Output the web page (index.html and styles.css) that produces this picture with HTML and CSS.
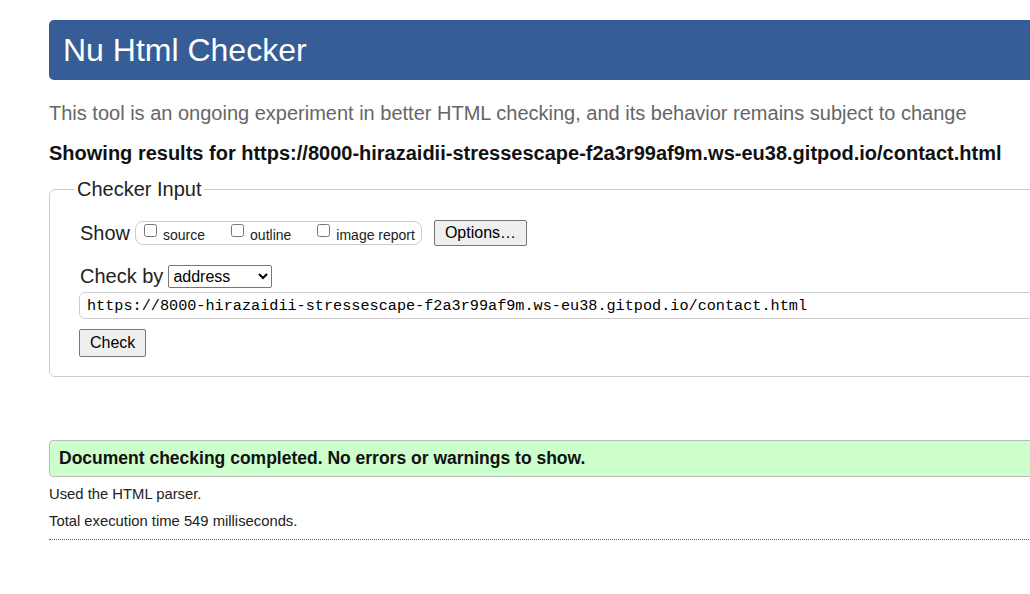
FILE: index.html
```html
<!DOCTYPE html>
<html>
<head>
<meta charset="utf-8">
<link rel="stylesheet" href="styles.css">
</head>
<body>
<div class="page">
  <h1 class="header">Nu Html Checker</h1>
  <p class="tagline">This tool is an ongoing experiment in better HTML checking, and its behavior remains subject to change</p>
  <p class="showing">Showing results for https://8000-hirazaidii-stressescape-f2a3r99af9m.ws-eu38.gitpod.io/contact.html</p>
  <fieldset class="checker">
    <legend class="legend">Checker Input</legend>
    <div class="row show-row">
      <span class="label">Show</span>
      <span class="group">
        <label class="opt"><input type="checkbox" class="cb"><span>source</span></label>
        <label class="opt"><input type="checkbox" class="cb"><span>outline</span></label>
        <label class="opt"><input type="checkbox" class="cb"><span>image report</span></label>
      </span>
      <button class="btn options">Options…</button>
    </div>
    <div class="row by-row">
      <span class="label">Check by</span>
      <select class="sel"><option>address</option></select>
    </div>
    <input class="url" type="text" value="https://8000-hirazaidii-stressescape-f2a3r99af9m.ws-eu38.gitpod.io/contact.html">
    <div class="row">
      <button class="btn check">Check</button>
    </div>
  </fieldset>
  <p class="success">Document checking completed. No errors or warnings to show.</p>
  <p class="meta">Used the HTML parser.</p>
  <p class="meta">Total execution time 549 milliseconds.</p>
  <hr class="rule">
</div>
</body>
</html>
```

FILE: styles.css
```css
html, body {
  margin: 0;
  padding: 0;
  background: #fff;
  overflow: hidden;
}
body {
  font-family: "Liberation Sans", Arial, sans-serif;
  color: #000;
}
.page {
  margin-left: 49px;
  padding-top: 20px;
  width: 1100px;
}
.header {
  margin: 0;
  height: 60px;
  box-sizing: border-box;
  background: #365d95;
  color: #fff;
  font-weight: normal;
  font-size: 32px;
  line-height: 60px;
  padding-left: 14px;
  border-radius: 5px;
}
.tagline {
  margin: 20px 0 0;
  font-size: 20px;
  line-height: 26px;
  color: #666;
}
.showing {
  margin: 14px 0 0;
  font-size: 20px;
  line-height: 26px;
  font-weight: bold;
  color: #111;
}
.checker {
  margin: 12px 0 0;
  border: 1px solid #ccc;
  border-radius: 6px;
  padding: 17px 0 19px 30px;
  min-width: 0;
}
.legend {
  font-size: 20px;
  margin-left: -5px;
  padding: 0 2px;
  color: #222;
}
.row {
  display: flex;
  align-items: center;
}
.label {
  font-size: 20px;
  color: #222;
}
.show-row {
  height: 30px;
}
.group {
  display: inline-flex;
  align-items: center;
  margin-left: 5px;
  height: 22px;
  border: 1px solid #ccc;
  border-radius: 8px;
  padding: 0 6px 0 6px;
  gap: 24px;
}
.opt {
  display: inline-flex;
  align-items: center;
  font-size: 14px;
  color: #222;
}
.cb {
  width: 13px;
  height: 13px;
  margin: 0 6px 0 2px;
  position: relative;
  top: -3px;
}
.opt span {
  position: relative;
  top: 2px;
}
.btn {
  font-family: "Liberation Sans", Arial, sans-serif;
  font-size: 16px;
  background: #efefef;
  border: 1px solid #767676;
  border-radius: 2px;
  color: #000;
  padding: 0 10px;
  height: 26px;
}
.options {
  margin-left: 12px;
}
.by-row {
  margin-top: 15px;
  height: 26px;
}
.sel {
  margin-left: 5px;
  width: 104px;
  height: 23px;
  font-family: "Liberation Sans", Arial, sans-serif;
  font-size: 16px;
  border: 1px solid #767676;
  border-radius: 2px;
  background: #fff;
  color: #000;
}
.url {
  display: block;
  margin: 3px 0 0 -1px;
  width: 1100px;
  height: 27px;
  box-sizing: border-box;
  border: 1px solid #ccc;
  border-radius: 6px;
  padding: 0 7px;
  font-family: "Liberation Mono", monospace;
  font-size: 15.2px;
  color: #000;
}
.check {
  margin-top: 10px;
  margin-left: -1px;
  height: 28px;
  padding: 0 10px;
}
.success {
  margin: 63px 0 0;
  height: 37px;
  box-sizing: border-box;
  background: #ccffcc;
  border: 1px solid #bbb;
  border-radius: 4px;
  font-weight: bold;
  font-size: 17.5px;
  line-height: 35px;
  padding-left: 9px;
  color: #111;
}
.meta {
  margin: 8px 0 0;
  font-size: 14.8px;
  line-height: 19px;
  color: #222;
}
.meta + .meta {
  margin-top: 8px;
}
.rule {
  margin: 8px 0 0;
  border: 0;
  border-top: 1px dotted #666;
  height: 0;
}
```
